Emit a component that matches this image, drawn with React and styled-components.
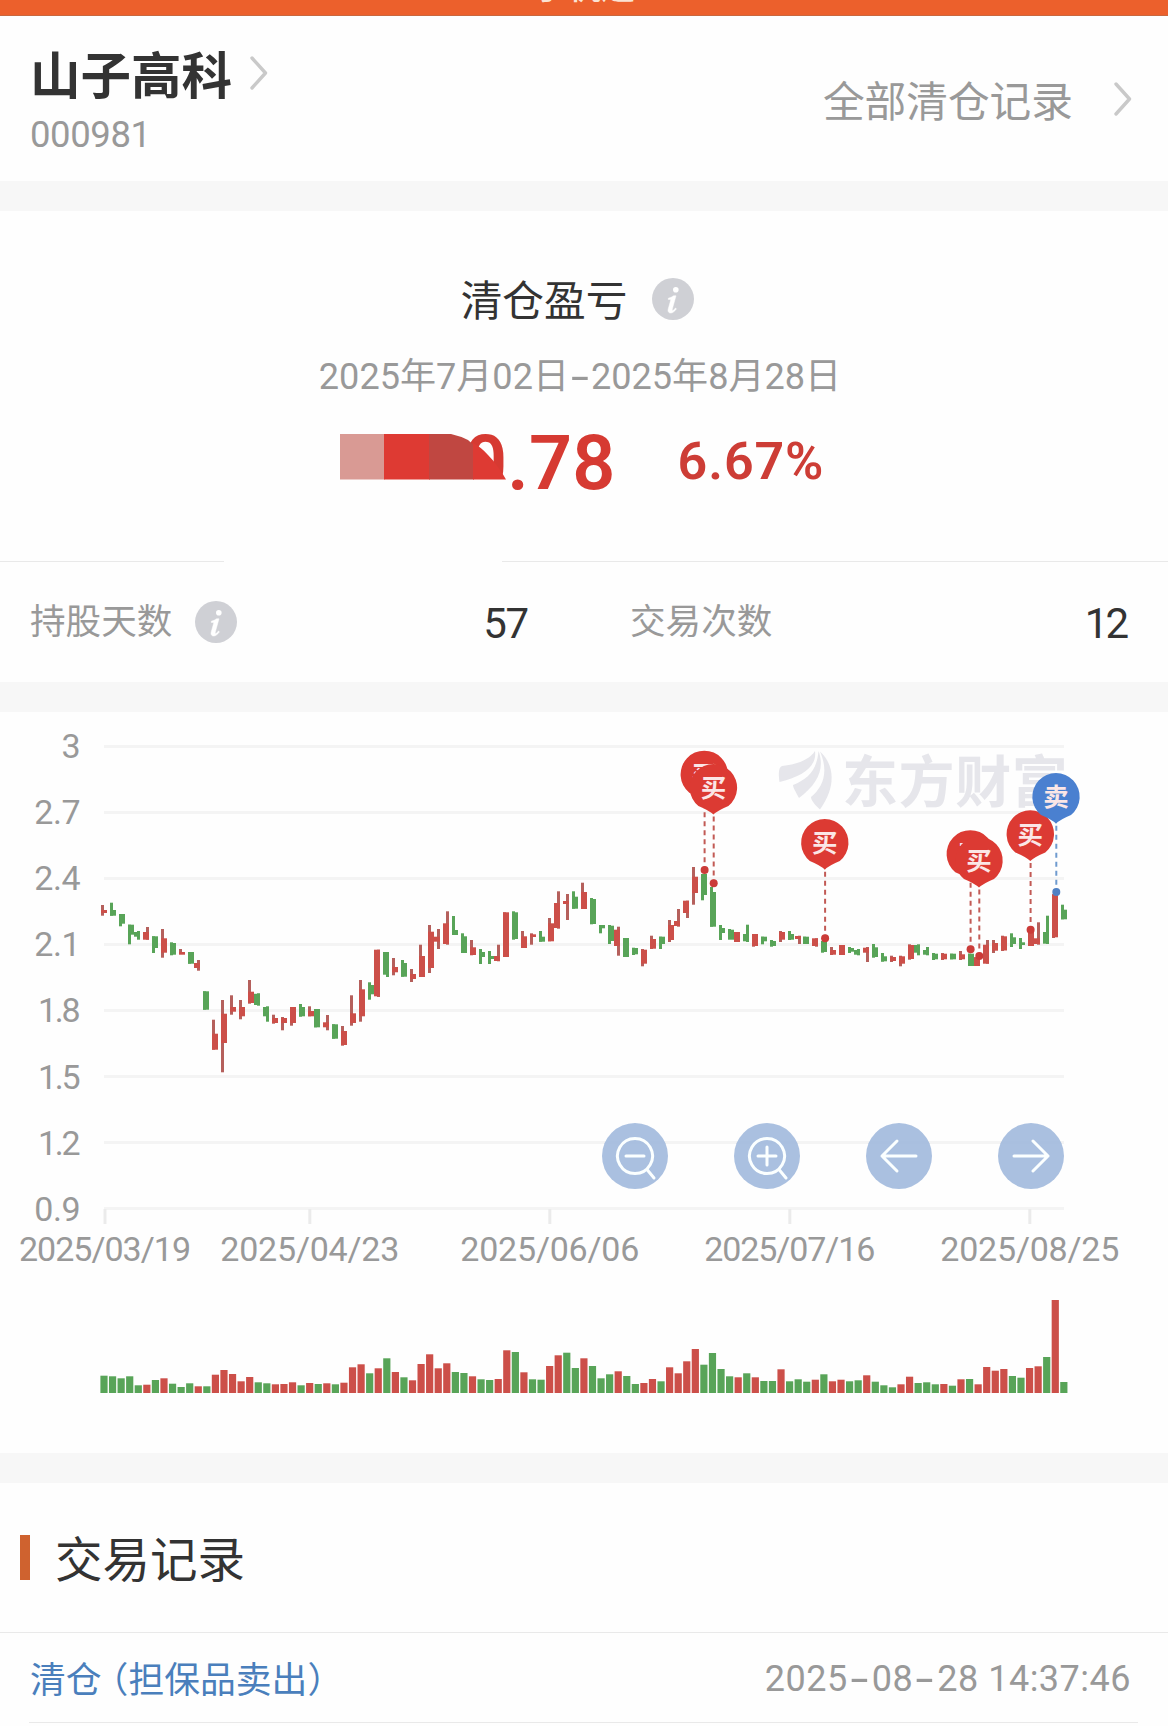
import styled, { createGlobalStyle } from "styled-components";

const GlobalStyle = createGlobalStyle`
  * {
    box-sizing: border-box;
  }

  body {
    margin: 0;
    background: #fefefe;
    font-family: Roboto, "Noto Sans CJK SC", sans-serif;
    color: #333;
  }
`;

const Page = styled.main`
  width: 1168px;
  height: 1726px;
  overflow: hidden;
  background-color: #fefefe;
`;

const TopBar = styled.div`
  display: flex;
  justify-content: center;
  align-items: flex-end;
  height: 16px;
  padding-bottom: 8px;
  overflow: hidden;
  background-color: #ec602c;
  border-bottom: 1px solid #c8683f;
  color: #fbe3d3;
  font-size: 34px;
  font-weight: 500;
  line-height: 40px;
`;

const Header = styled.header`
  display: flex;
  justify-content: space-between;
  height: 165px;
  padding: 31px 36px 0 30px;
`;

const StockName = styled.h1`
  display: flex;
  align-items: center;
  gap: 18px;
  margin: 0;
  font-size: 50.5px;
  line-height: 60px;
  font-weight: 700;

  svg {
    margin-bottom: 8px;
  }
`;

const StockCode = styled.div`
  margin-top: 8px;
  color: #999;
  font-size: 36.5px;
  line-height: 40px;
  letter-spacing: -0.4px;
`;

const AllRecords = styled.a`
  display: flex;
  align-items: center;
  gap: 41px;
  height: 104px;
  color: #999;
  font-size: 41.7px;
`;

const Gap = styled.div`
  height: 30px;
  background-color: #f7f7f7;
`;

const Summary = styled.section`
  display: flex;
  flex-direction: column;
  align-items: center;
  height: 350px;
  padding-top: 61px;
`;

const SummaryTitle = styled.h2`
  display: flex;
  align-items: center;
  gap: 25px;
  margin: 0;
  padding-right: 13px;
  font-size: 41.7px;
  line-height: 60px;
  font-weight: 400;
`;

const InfoBadge = styled.svg`
  display: block;
  width: 42px;
  height: 42px;
  margin-bottom: ${(props) => props.$lift || 0}px;
`;

const DateRange = styled.div`
  margin-top: 23px;
  padding-right: 8px;
  color: #999;
  font-size: 36.1px;
  line-height: 44px;
  white-space: nowrap;
`;

const Dash = styled.span`
  display: inline-block;
  width: ${(props) => props.$width}px;
  text-align: center;
  transform: scale(1.8, 1.2);
`;

const Result = styled.div`
  display: flex;
  align-items: center;
  margin-top: 18px;
  padding-right: 4px;
  color: #d63a32;
  font-weight: 700;
`;

const Amount = styled.div`
  position: relative;
  width: 276px;
  padding-top: 2px;
  font-size: 75.5px;
  font-weight: 600;
  line-height: 88px;
  letter-spacing: 0.2px;
  text-align: right;
`;

const Mosaic = styled.svg`
  position: absolute;
  left: 0;
  top: 17px;
  overflow: visible;
`;

const Percent = styled.div`
  margin: 0 0 1px 62px;
  color: #cd3d36;
  font-size: 52px;
  font-weight: 600;
  letter-spacing: 0.9px;
`;

const DividerRow = styled.div`
  display: flex;
  justify-content: space-between;
  height: 1px;
`;

const DividerPart = styled.div`
  width: ${(props) => props.$width}px;
  background-color: #e9e9e9;
`;

const Stats = styled.section`
  display: grid;
  grid-template-columns: 498px 498px;
  gap: 102px;
  height: 120px;
  padding: 0 38px 0 30px;
`;

const Stat = styled.div`
  display: flex;
  align-items: center;
  gap: 23px;
  padding-bottom: 8px;
  color: #999;
  font-size: 35.6px;

  svg {
    margin-top: 7px;
  }
`;

const StatValue = styled.span`
  margin-left: auto;
  padding-top: 10px;
  padding-right: ${(props) => props.$inset || 0}px;
  color: #333;
  font-size: 42px;
  letter-spacing: ${(props) => props.$spacing}px;
`;

const ChartCard = styled.section`
  position: relative;
  height: 741px;
`;

const ChartSvg = styled.svg`
  display: block;
  font-family: Roboto, "Noto Sans CJK SC", sans-serif;
`;

const Tools = styled.div`
  position: absolute;
  left: 602px;
  top: 411px;
  display: flex;
  gap: 66px;
`;

const ToolButton = styled.button`
  width: 66px;
  height: 66px;
  padding: 0;
  border: none;
  border-radius: 50%;
  background-color: rgba(155, 181, 219, 0.85);

  svg {
    display: block;
  }
`;

const RecordsHeader = styled.div`
  display: flex;
  align-items: center;
  gap: 25px;
  height: 150px;
  padding: 0 0 0 20px;
  border-bottom: 1px solid #e9e9e9;
`;

const Accent = styled.span`
  width: 10px;
  height: 45px;
  background-color: #cf622f;
`;

const RecordsTitle = styled.h2`
  margin: 0;
  padding-top: 6px;
  font-size: 47.5px;
  line-height: 56px;
  font-weight: 400;
`;

const RecordRow = styled.div`
  display: flex;
  align-items: center;
  justify-content: space-between;
  height: 90px;
  margin: 0 30px 0 29px;
  padding: 2px 7px 0 1px;
  border-bottom: 1px solid #e9e9e9;
`;

const RecordType = styled.span`
  padding-bottom: 4px;
  color: #4a7fbc;
  font-size: 35.8px;

  span {
    margin-left: -9px;
  }
`;

const RecordTime = styled.time`
  color: #999;
  font-size: 36px;
  letter-spacing: 0.5px;
`;

const RED = "#cc4f49";
const GREEN = "#58a458";

// [color, bodyX, wick side, high, low, bodyTop, bodyBottom]
const candles = [
  ["r", 101, 0, 905, 915.7, 910, 913],
  ["g", 110, 0, 902.7, 915.7, 910, 915.7],
  ["g", 119, 0, 914, 926.3, 914, 923.7],
  ["g", 128, 0, 924.7, 944.3, 924.7, 934.7],
  ["g", 134, 1, 931, 939.7, 932, 936.7],
  ["r", 143, 1, 927, 939.7, 932, 939.7],
  ["g", 152, 0, 936.3, 953, 936.3, 948],
  ["r", 161, 0, 929, 957.7, 938.3, 952.7],
  ["g", 170, 0, 942.3, 955.3, 943, 954.7],
  ["r", 179, 0, 949, 953.3, 952, 954.7],
  ["g", 188, 0, 952, 963.7, 952, 963.7],
  ["r", 194, 1, 960, 970.7, 963, 968],
  ["g", 203, 0, 991.3, 1009.7, 991.3, 1009.7],
  ["r", 212, 0, 1019.7, 1049.7, 1033.7, 1049.7],
  ["r", 221, 0, 1000, 1072.3, 1013.7, 1043],
  ["r", 230, 0, 995.3, 1014.7, 1007, 1011.7],
  ["r", 239, 0, 1000, 1019.3, 1007, 1016.3],
  ["r", 248, 0, 980, 1003.7, 991.7, 1003],
  ["g", 254, 1, 993.3, 1005.7, 993.8, 1005],
  ["g", 263, 1, 1006.3, 1021.7, 1007, 1016.3],
  ["r", 272, 0, 1014.7, 1023.7, 1018, 1023],
  ["r", 281, 0, 1017, 1030.3, 1018, 1023],
  ["r", 290, 0, 1007, 1025.7, 1007, 1023],
  ["g", 299, 0, 1004, 1016.7, 1007, 1016.3],
  ["r", 308, 0, 1006.3, 1016.3, 1011, 1016.3],
  ["g", 314, 0, 1009, 1027.3, 1009, 1027.3],
  ["r", 323, 1, 1015, 1030.3, 1022.3, 1027.3],
  ["g", 332, 0, 1024.3, 1038.7, 1024.3, 1038.7],
  ["r", 341, 0, 1026, 1045.7, 1031, 1045],
  ["r", 350, 0, 995.3, 1025.7, 1013.3, 1023],
  ["r", 359, 0, 980, 1021.7, 989.3, 1016.3],
  ["g", 368, 0, 982.3, 999.7, 985, 994.3],
  ["r", 374, 1, 949.7, 997, 949.7, 996.3],
  ["g", 383, 1, 952, 977, 952, 974.7],
  ["r", 392, 0, 958, 975.3, 967, 972.3],
  ["g", 401, 0, 960, 976.7, 963, 976.7],
  ["r", 410, 0, 969, 982, 974, 979],
  ["r", 419, 0, 944.7, 977, 956, 977],
  ["r", 428, 0, 925, 973, 931.7, 968],
  ["r", 434, 1, 929, 949, 936.7, 941.7],
  ["r", 443, 1, 911.3, 944.7, 923.3, 944],
  ["g", 452, 0, 916, 935, 930, 935],
  ["g", 461, 0, 933.3, 953, 936.3, 953],
  ["r", 470, 0, 940, 955.3, 947.3, 955],
  ["g", 479, 0, 949, 964, 952, 957],
  ["g", 488, 0, 951, 964, 956, 959],
  ["r", 494, 1, 944.7, 961.3, 956, 961],
  ["r", 503, 0, 912.3, 957, 912.3, 957],
  ["g", 512, 0, 911.3, 939.7, 912.3, 939],
  ["r", 521, 0, 931, 948, 936.3, 948],
  ["r", 530, 0, 933.3, 944.7, 934.3, 937],
  ["g", 539, 0, 931, 941.7, 936.7, 941.7],
  ["r", 548, 0, 918, 941.3, 923.3, 941.3],
  ["r", 554, 1, 891.3, 928.7, 903, 928],
  ["r", 563, 1, 894, 920, 901, 904],
  ["g", 572, 0, 891.3, 908.7, 896.7, 908.7],
  ["r", 581, 0, 882.7, 909, 892, 909],
  ["g", 590, 0, 898, 924.3, 899, 924],
  ["g", 599, 0, 925, 933.3, 925, 928.3],
  ["g", 608, 0, 925, 944, 925.7, 941],
  ["r", 614, 1, 926.7, 955.7, 929.7, 946],
  ["g", 623, 0, 938, 957, 938, 957],
  ["g", 632, 0, 947.7, 955, 948, 954.3],
  ["r", 641, 0, 949, 966.3, 949.7, 963.7],
  ["r", 650, 0, 935.7, 949, 939, 948.7],
  ["g", 659, 0, 936.7, 949, 936.7, 944],
  ["r", 668, 0, 920, 942, 925, 940],
  ["r", 674, 1, 909, 926.7, 921, 926],
  ["r", 683, 1, 900.7, 918, 900.7, 913],
  ["r", 692, 0, 867, 904.7, 876.7, 893],
  ["g", 701, 0, 874, 900.3, 874, 895],
  ["g", 710, 0, 887, 926.7, 892, 926.7],
  ["g", 719, 0, 925, 940, 928, 933],
  ["g", 728, 0, 929, 939, 929.7, 939.7],
  ["r", 734, 0, 932, 941, 932, 942],
  ["g", 743, 1, 924.7, 942, 934, 941.3],
  ["r", 752, 0, 934, 946.7, 934, 946],
  ["g", 761, 0, 936.7, 944.3, 936.7, 941.3],
  ["g", 770, 0, 940, 946.7, 941, 946],
  ["r", 779, 0, 931, 942, 932, 939.7],
  ["g", 788, 0, 931, 940, 934, 939.7],
  ["r", 795, 1, 935.7, 944, 936, 939],
  ["g", 803, 0, 936.7, 944, 936.7, 944],
  ["r", 812, 1, 938.3, 946.7, 938.3, 946],
  ["g", 821, 0, 941, 952.7, 941, 952],
  ["r", 830, 0, 947, 955, 950, 954.7],
  ["r", 839, 0, 945, 955, 945, 955],
  ["g", 848, 0, 947, 953, 948, 951.7],
  ["g", 854, 1, 949, 955.3, 950, 954.7],
  ["r", 863, 1, 947, 962, 947.7, 952.7],
  ["g", 872, 0, 944, 957.7, 947.3, 957],
  ["g", 881, 0, 953, 961.7, 956.3, 961.3],
  ["r", 890, 0, 955.7, 962, 957, 961],
  ["r", 899, 0, 955.7, 966.3, 956.3, 963.7],
  ["r", 908, 0, 944.3, 959.7, 945, 959],
  ["g", 914, 1, 944.3, 955.3, 945, 952.7],
  ["g", 923, 1, 947, 955.3, 950, 954.7],
  ["g", 932, 0, 953, 960, 953.7, 959.3],
  ["r", 941, 0, 953, 960, 953.7, 959.3],
  ["g", 950, 0, 953.7, 959.3, 953.7, 959.3],
  ["r", 959, 0, 951, 960, 954.3, 959.3],
  ["g", 968, 0, 953.7, 966, 953.7, 966],
  ["r", 974, 0, 957.3, 966, 957.3, 966],
  ["r", 983, 1, 940, 963.7, 944.7, 963.7],
  ["r", 992, 0, 940, 953, 943, 950.7],
  ["r", 1001, 0, 935.7, 951, 936.3, 950.5],
  ["g", 1010, 0, 933.3, 947, 937.3, 944],
  ["g", 1019, 0, 938, 949, 942.3, 945],
  ["r", 1028, 0, 932, 946, 932, 946],
  ["r", 1034, 1, 922.3, 944.7, 938.3, 944],
  ["g", 1043, 1, 915.7, 944, 932, 943.7],
  ["r", 1052, 0, 894.3, 938, 894.3, 937.3],
  ["g", 1061, 0, 904.7, 919.3, 909.7, 919.3],
];

const volumes = [
  17.3, 16.7, 14.7, 16.7, 7.7, 8.3, 13, 14.7, 9.3, 6, 9.7, 6.7, 6.7, 18.3, 23,
  19, 11.7, 16, 10.7, 9.7, 8.7, 9, 10.7, 7.7, 10, 9, 9.7, 8.7, 10.3, 25.7, 28.7,
  19.7, 24.7, 34.7, 21, 15.7, 12.7, 29, 38.7, 24.7, 29.7, 21, 20, 16.7, 13.7,
  13, 14, 42.7, 41, 20.7, 13.7, 13.3, 27, 37.7, 40.3, 25, 34.7, 27, 14.7, 18.7,
  21.7, 17, 9, 10, 14, 11.7, 25.7, 19.7, 31.7, 44, 28.3, 40, 24, 16.7, 15.7,
  19.7, 15.7, 12, 12, 23.7, 11.7, 13.7, 11.3, 13.3, 18.7, 11.7, 13.3, 11.7,
  12.7, 17.7, 11.3, 7.7, 5.7, 8.7, 16.3, 10, 10.7, 8.7, 9, 7.3, 13.7, 14, 8.7,
  26, 22.3, 24, 17, 15.3, 25, 26.7, 36, 93, 11,
];

const volumeColors =
  "ggggg rgrgg grgrr rrrgg rrrgr grgrr rgrgr grrrr rggrg grrgr ggrrg grggg rggrr grrrr ggggr grggr gggrg rrggr gggrr gggrg rgrrr rggrr grg".replace(
    / /g,
    ""
  );

const prices = ["3", "2.7", "2.4", "2.1", "1.8", "1.5", "1.2", "0.9"];

const dates = [
  { x: 105, label: "2025/03/19", width: 172 },
  { x: 309.8, label: "2025/04/23", width: 179 },
  { x: 549.8, label: "2025/06/06", width: 179 },
  { x: 789.8, label: "2025/07/16", width: 171 },
  { x: 1029.8, label: "2025/08/25", width: 179 },
];

const pins = [
  { x: 704.3, y: 774.3, dot: 870 },
  { x: 713.4, y: 787.6, dot: 883.3 },
  { x: 824.8, y: 842.7, dot: 938.3 },
  { x: 970.3, y: 853.8, dot: 949.3 },
  { x: 979, y: 860.5, dot: 956 },
  { x: 1030.3, y: 834, dot: 929.7 },
  { x: 1056, y: 796.7, dot: 892, sell: true },
];

const Chevron = () => (
  <svg width="18" height="34" viewBox="0 0 18 34">
    <path
      d="M2 2 15.500 17 2 32"
      fill="none"
      stroke="#c9c9c9"
      strokeWidth="3.400"
      strokeLinejoin="round"
      strokeLinecap="round"
    />
  </svg>
);

const Info = ({ lift }) => (
  <InfoBadge $lift={lift} viewBox="0 0 42 42">
    <circle cx="21" cy="21" r="21" fill="#cfd0d5" />
    <circle cx="23.800" cy="11.800" r="2.800" fill="#fff" />
    <path
      d="M16.300 20.300c2-.6 4-1.500 5.300-2.500h2.400l-3.600 12.900c-.4 1.600 0 2.100.9 1.600.8-.5 1.500-1.300 2.200-2.300l.9.800c-1.700 2.700-3.700 4.200-5.700 4.200-2.300 0-3.100-1.500-2.500-3.900l2.600-9.300c-.7-.4-1.500-.4-2.500-.3z"
      fill="#fff"
      stroke="#fff"
      strokeWidth="0.500"
    />
  </InfoBadge>
);

const Pin = ({ x, y, dot, sell }) => {
  const color = sell ? "#4a80d0" : "#dc3a33";
  return (
    <g>
      <line
        x1={x + 0.3}
        x2={x + 0.3}
        y1={y + 29}
        y2={dot}
        stroke={sell ? "#6f9bcf" : "#c25a55"}
        strokeWidth="2"
        strokeDasharray="5 4"
      />
      <circle cx={x + 0.3} cy={dot} r="4" fill={sell ? "#4f80c4" : "#cb3b38"} />
      <path
        d={`M${x - 15} ${y + 18.4}A23.700 23.700 0 1 1 ${x + 15} ${y + 18.4}Q${
          x + 4
        } ${y + 23} ${x} ${y + 27}Q${x - 4} ${y + 23} ${x - 15} ${y + 18.4}Z`}
        fill={color}
      />
      <text
        x={x}
        y={y + 9.6}
        textAnchor="middle"
        fontSize="25.500"
        fontWeight="700"
        fill="#fbe6e6"
      >
        {sell ? "卖" : "买"}
      </text>
    </g>
  );
};

const Watermark = () => (
  <g fill="#e6e6eb">
    <path d="M779.500 782C778 772 779 767 782 766 798 764 809 760 815 751 817 765 805 776 779.500 782Z" />
    <path d="M799 798C795 791 793 787 793 785 808 779 817 770 818.500 751 825 768 818 784 799 798Z" />
    <path d="M820 809.500C814 804 811 800 811 797 823 787 829 772 820 751.500 834 764 837 786 820 809.500Z" />
    <text
      x="842"
      y="801.500"
      fontSize="56"
      fontWeight="700"
      letterSpacing="0.600"
    >
      东方财富
    </text>
  </g>
);

const Chart = () => (
  <ChartSvg width="1168" height="741" viewBox="0 712 1168 741">
    {prices.map((price, i) => (
      <g key={price}>
        <rect x="104" y={745 + i * 66} width="960" height="3" fill="#f4f4f4" />
        <text
          x={price.startsWith("1") ? 78.5 : 80}
          y={758 + i * 66.1}
          textAnchor="end"
          fontSize="34"
          fill="#999"
          letterSpacing={price.startsWith("1") ? -2.2 : -0.5}
        >
          {price}
        </text>
      </g>
    ))}
    {dates.map((date) => (
      <g key={date.label}>
        <rect x={date.x - 1.5} y="1209" width="3" height="15" fill="#ebebeb" />
        <text
          x={date.x}
          y="1261"
          textAnchor="middle"
          fontSize="34"
          fill="#999"
          textLength={date.width}
        >
          {date.label}
        </text>
      </g>
    ))}
    <Watermark />
    {candles.map(([color, x, side, high, low, top, bottom]) => (
      <g key={x} fill={color === "r" ? RED : GREEN}>
        <rect
          x={x + side * 3}
          y={high}
          width="3"
          height={low - high}
          fill={color === "r" ? "#b5605c" : GREEN}
        />
        <rect x={x} y={top} width="6" height={bottom - top} />
      </g>
    ))}
    {pins.map((pin) => (
      <Pin key={pin.x} {...pin} />
    ))}
    {volumes.map((volume, i) => (
      <rect
        key={i}
        x={100.4 + i * 8.57}
        y={1393 - volume}
        width="7.200"
        height={volume}
        fill={volumeColors[i] === "r" ? RED : GREEN}
      />
    ))}
  </ChartSvg>
);

const toolIcons = [
  "M33 15.500a17.500 17.500 0 1 0 .01 0ZM24 33h18M45 46.500l7 8.500",
  "M33 15.500a17.500 17.500 0 1 0 .01 0ZM24 33h18M33 24v18M45 46.500l7 8.500",
  "M50 33H16M31 18 16 33l15 15",
  "M16 33h34M35 18l15 15-15 15",
];

const App = () => {
  return (
    <Page>
      <GlobalStyle />
      <TopBar>手机通</TopBar>

      <Header>
        <div>
          <StockName>
            山子高科
            <Chevron />
          </StockName>
          <StockCode>000981</StockCode>
        </div>
        <AllRecords>
          全部清仓记录
          <Chevron />
        </AllRecords>
      </Header>

      <Gap />

      <Summary>
        <SummaryTitle>
          清仓盈亏
          <Info lift={6} />
        </SummaryTitle>
        <DateRange>
          2025年7月02日<Dash $width={22}>-</Dash>2025年8月28日
        </DateRange>
        <Result>
          <Amount>
            0.78
            <Mosaic width="170" height="46" viewBox="0 0 170 46">
              {/* hides the parts of the digit around the mosaic blocks */}
              <path d="M108-8h23l-3 14H108zM108 45h60v16h-60z" fill="#fefefe" />
              <rect width="45" height="45.500" fill="#d99a94" />
              <rect x="44" width="46" height="45.500" fill="#de3a33" />
              <path
                d="M89 0h22q9 2 17 6 5 4 6 6v33.500H89z"
                fill="#c04741"
              />
              <path
                d="M133 9q8 4 15 12 6 6 10 12 5 7 8 12.500h-33z"
                fill="#de3a33"
              />
            </Mosaic>
          </Amount>
          <Percent>6.67%</Percent>
        </Result>
      </Summary>

      <DividerRow>
        <DividerPart $width={224} />
        <DividerPart $width={666} />
      </DividerRow>

      <Stats>
        <Stat>
          持股天数
          <Info />
          <StatValue $spacing={-1.2}>57</StatValue>
        </Stat>
        <Stat>
          交易次数
          <StatValue $spacing={-3} $inset={2}>
            12
          </StatValue>
        </Stat>
      </Stats>

      <Gap />

      <ChartCard>
        <Chart />
        <Tools>
          {toolIcons.map((icon) => (
            <ToolButton key={icon}>
              <svg width="66" height="66" viewBox="0 0 66 66">
                <path
                  d={icon}
                  fill="none"
                  stroke="#fbffff"
                  strokeWidth="3"
                  strokeLinecap="round"
                  strokeLinejoin="round"
                />
              </svg>
            </ToolButton>
          ))}
        </Tools>
      </ChartCard>

      <Gap />

      <section>
        <RecordsHeader>
          <Accent />
          <RecordsTitle>交易记录</RecordsTitle>
        </RecordsHeader>
        <RecordRow>
          <RecordType>
            清仓<span>（担保品卖出）</span>
          </RecordType>
          <RecordTime>
            2025<Dash $width={24}>-</Dash>08<Dash $width={24}>-</Dash>28
            14:37:46
          </RecordTime>
        </RecordRow>
      </section>
    </Page>
  );
};

export default App;
